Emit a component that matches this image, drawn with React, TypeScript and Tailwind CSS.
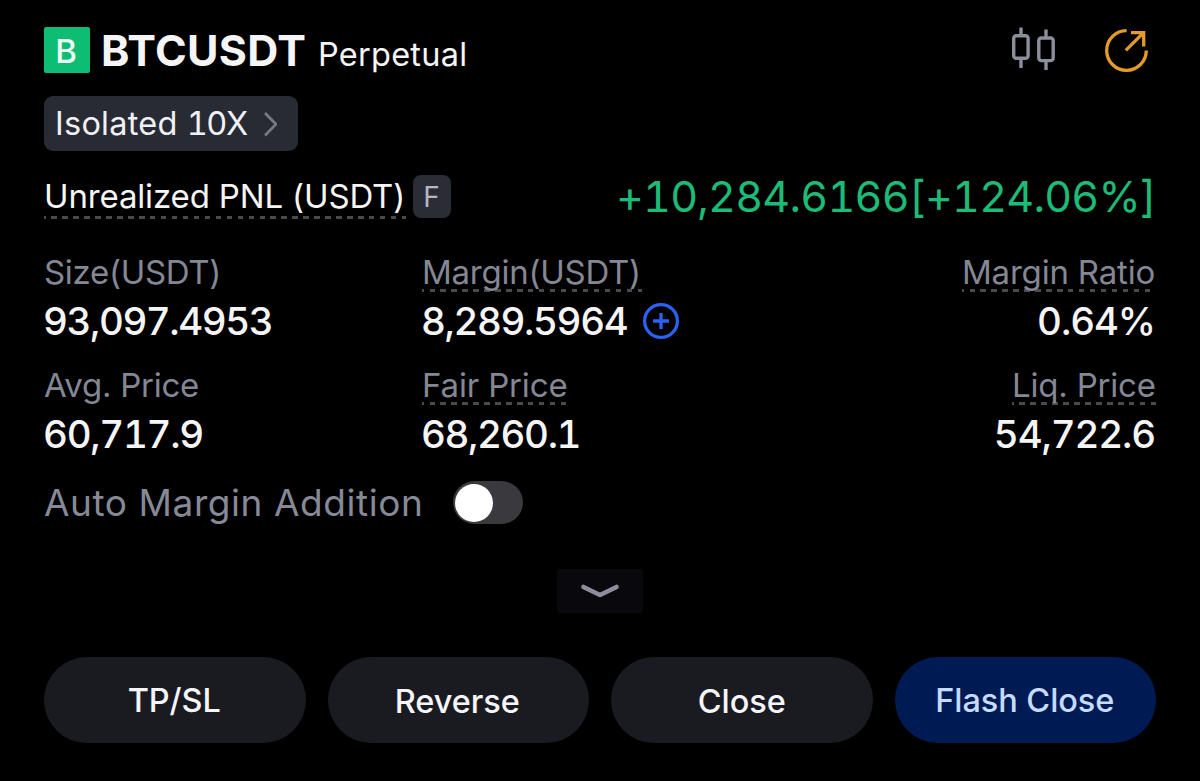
import type { ReactNode } from "react";

const underline =
  "bg-[repeating-linear-gradient(90deg,#4a4a4e_0px,#4a4a4e_2px,transparent_2px,transparent_7.5px,#4a4a4e_7.5px,#4a4a4e_10.95px)] bg-[length:100%_3px] bg-bottom bg-no-repeat";

function Metric({
  label,
  value,
  dashed = false,
  right = false,
  labelClass,
  valueClass,
  children,
}: {
  label: string;
  value: string;
  dashed?: boolean;
  right?: boolean;
  labelClass: string;
  valueClass: string;
  children?: ReactNode;
}) {
  return (
    <div className={right ? "flex flex-col items-end" : "flex flex-col items-start"}>
      <div className={`h-[39px] leading-[39px] text-[33px] text-[#848794] ${labelClass} ${dashed ? underline : ""}`}>
        {label}
      </div>
      <div className="flex h-[56px] items-center pt-[2px]">
        <span className={`text-[38.5px] font-medium leading-[56px] tabular-nums text-[#f5f5f5] ${valueClass}`}>{value}</span>
        {children}
      </div>
    </div>
  );
}

export default function App() {
  return (
    <main className="flex h-[781px] w-[1200px] flex-col overflow-hidden whitespace-nowrap bg-black px-[44px] pt-[27px] font-['Inter',sans-serif] text-[#f5f5f5]">
      <header className="flex h-[47px] items-start justify-between">
        <div className="flex items-start">
          <div className="flex h-[46px] w-[46px] items-center justify-center rounded-[2px] bg-[#0dbd73] pr-[2px] pt-[2px] text-[33px] font-medium leading-none text-[#f0fff6]">
            B
          </div>
          <h1 className="ml-[11px] w-[204px] text-[43px] font-bold leading-[47px] tracking-[0.3px]">BTCUSDT</h1>
          <span className="ml-[13px] text-[32.5px] leading-[56px] tracking-[0.25px]">Perpetual</span>
        </div>
        <div className="flex pr-[6px]">
          <svg className="mr-[48px] h-[46px] w-[46px]" viewBox="0 0 46 46" fill="none" stroke="#8b8e9b" strokeWidth="3.4">
            <rect x="3.7" y="8.7" width="14.4" height="22.6" rx="2.6" />
            <path d="M11 0.5V8.7M11 31.3V41" />
            <rect x="28.8" y="11" width="14.4" height="22.6" rx="2.6" />
            <path d="M36 2.5V11M36 33.6V43" />
          </svg>
          <svg className="h-[46px] w-[46px]" viewBox="0 0 46 46" fill="none" stroke="#e39c2b" strokeWidth="3.3">
            <path d="M22.6 3.7A19.8 19.8 0 1 0 42.3 23.5" />
            <path d="M21.8 23.3L39.3 5.8M27 5.7H39.7V19.5" />
          </svg>
        </div>
      </header>

      <button className="mt-[22px] flex h-[55px] w-[254px] shrink-0 items-center rounded-[9px] bg-[#282b34] pl-[11px] text-[32.5px] text-[#f0f1f5]">
        <span className="w-[204px] pt-[2px] text-left tabular-nums tracking-[0.25px]">
          Isolated <span className="tracking-[-1.4px]">10X</span>
        </span>
        <svg className="h-[28px] w-[18px]" viewBox="0 0 18 28" fill="none" stroke="#777a87" strokeWidth="2.7">
          <path d="M6 3L17 14.2L6 25.5" />
        </svg>
      </button>

      <section className="mt-[23px] flex h-[45px] shrink-0 items-start justify-between">
        <div className="flex items-start">
          <span className={`h-[45px] w-[362px] text-[33px] leading-[44px] tracking-[-0.15px] ${underline}`}>Unrealized PNL (USDT)</span>
          <span className="ml-[7px] mt-[1px] flex h-[43px] w-[38px] items-center justify-center rounded-[8px] bg-[#2a2c36] pr-[1px] text-[28px] text-[#b5b7c2]">
            F
          </span>
        </div>
        <span className="text-[43px] leading-[44px] tabular-nums tracking-[-0.75px] text-[#1cbb77]">+10,284.6166[+124.06%]</span>
      </section>

      <section className="mt-[34px] grid shrink-0 grid-cols-[378px_378px_356px] gap-y-[18px]">
        <Metric label="Size(USDT)" value="93,097.4953" labelClass="tracking-[-0.3px]" valueClass="-ml-[1px] tracking-[-1.45px]" />
        <Metric label="Margin(USDT)" value="8,289.5964" dashed labelClass="w-[220px] tracking-[-0.25px]" valueClass="-ml-[1px] w-[208px] tracking-[-1.4px]">
          <svg className="ml-[13px] h-[38px] w-[38px]" viewBox="0 0 38 38" fill="none" stroke="#2962f6" strokeWidth="3.3">
            <circle cx="19" cy="19" r="16.4" />
            <path d="M19 11V27M11 19H27" />
          </svg>
        </Metric>
        <Metric label="Margin Ratio" value="0.64%" dashed right labelClass="w-[194px] tracking-[-0.2px]" valueClass="mr-[1px] tracking-[-1.1px]" />
        <Metric label="Avg. Price" value="60,717.9" labelClass="tracking-[-0.25px]" valueClass="-ml-[1px] tracking-[-1.3px]" />
        <Metric label="Fair Price" value="68,260.1" dashed labelClass="w-[145px] tracking-[-0.15px]" valueClass="-ml-[1px] tracking-[-1.4px]" />
        <Metric label="Liq. Price" value="54,722.6" dashed right labelClass="w-[144px] tracking-[-0.2px]" valueClass="mr-[1px] tracking-[-1.15px]" />
      </section>

      <section className="mt-[20px] flex h-[43px] shrink-0 items-center">
        <span className="w-[409px] text-[37px] tracking-[0.57px] text-[#868996]">Auto Margin Addition</span>
        <button role="switch" aria-checked="false" className="flex h-[43px] w-[70px] items-center rounded-full bg-[#3a393e] pl-[2px]">
          <span className="h-[38px] w-[38px] rounded-full bg-white" />
        </button>
      </section>

      <button className="mt-[45px] flex h-[44px] w-[86px] shrink-0 items-center justify-center self-center rounded-[3px] bg-[#08080d]">
        <svg className="h-[18px] w-[42px]" viewBox="0 0 42 18" fill="none" stroke="#8c8f9b" strokeWidth="4.6" strokeLinecap="round" strokeLinejoin="round">
          <path d="M4.5 5L21 13L37.5 5" />
        </svg>
      </button>

      <footer className="mt-[44px] grid h-[86px] shrink-0 grid-cols-4 gap-x-[22px] text-[32.5px] font-medium tracking-[-0.05px]">
        <button className="rounded-full bg-[#1a1b20] pr-[1px] pt-[2px] text-[#f5f5fa]">TP/SL</button>
        <button className="rounded-full bg-[#1a1b20] pr-[2px] pt-[4px] text-[#f5f5fa]">Reverse</button>
        <button className="rounded-full bg-[#1a1b20] pt-[4px] text-[#f5f5fa]">Close</button>
        <button className="rounded-full bg-[#001b54] pr-[1px] pt-[2px] text-[#c5dcff]">Flash Close</button>
      </footer>
    </main>
  );
}
